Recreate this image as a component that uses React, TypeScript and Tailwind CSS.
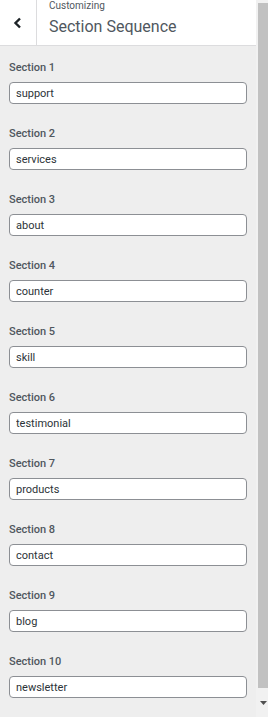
const sections = [
  "support",
  "services",
  "about",
  "counter",
  "skill",
  "testimonial",
  "products",
  "contact",
  "blog",
  "newsletter",
];

export default function App() {
  return (
    <div
      className="flex h-[717px] w-[268px] overflow-hidden bg-[#eeeeee]"
      style={{ fontFamily: "Roboto, 'Noto Sans', sans-serif" }}
    >
      <div className="flex min-w-0 flex-1 flex-col">
        <div className="flex h-[46px] shrink-0 border-b border-[#dcdcde] bg-white">
          <button className="flex w-[37px] items-center justify-center border-r border-[#dcdcde]">
            <svg width="10" height="12" viewBox="0 0 10 12">
              <polyline
                points="7,1.5 2.5,6 7,10.5"
                fill="none"
                stroke="#1d2327"
                strokeWidth="2.4"
              />
            </svg>
          </button>
          <div className="flex flex-col pl-[12px]">
            <span className="text-[10px] leading-[12px] text-[#50575e]">
              Customizing
            </span>
            <span className="mt-[4px] text-[16px] leading-[22px] text-[#50575e]">
              Section Sequence
            </span>
          </div>
        </div>
        <div className="flex flex-col gap-[22px] px-[9px] pt-[14px]">
          {sections.map((s, i) => (
            <div key={s} className="flex flex-col">
              <label className="text-[11px] font-medium leading-[16px] text-[#50575e]">
                Section {i + 1}
              </label>
              <input
                readOnly
                value={s}
                className="mt-[6px] h-[22px] w-full rounded-[4px] border border-[#8c8f94] bg-white px-[6px] text-[11px] text-[#2c3338] outline-none"
              />
            </div>
          ))}
        </div>
      </div>
      <div className="flex w-[12px] shrink-0 flex-col bg-[#f1f1f1]">
        <div className="ml-[2px] mt-[3px] h-[685px] w-[10px] bg-[#c1c1c1]" />
        <div className="flex flex-1 items-center justify-center pl-[2px]">
          <svg width="7" height="4" viewBox="0 0 7 4">
            <polygon points="0,0 7,0 3.5,4" fill="#505050" />
          </svg>
        </div>
      </div>
    </div>
  );
}
